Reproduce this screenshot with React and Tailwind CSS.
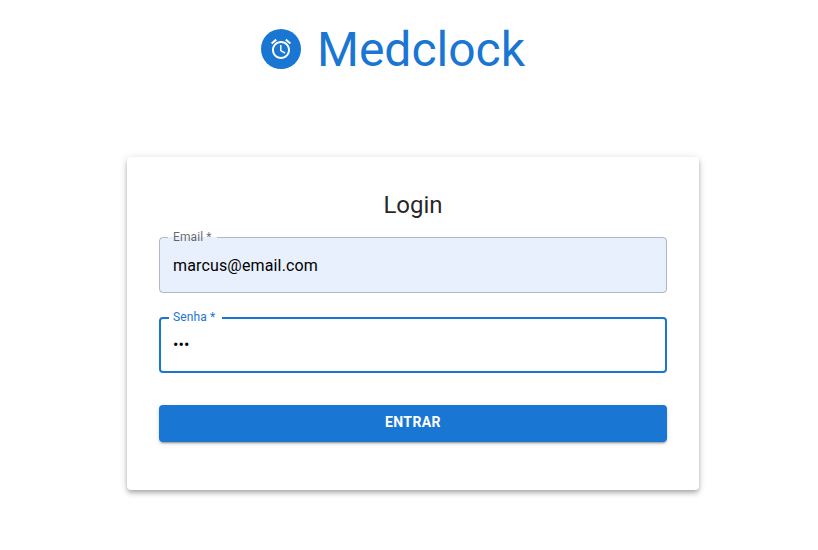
const outline = "pointer-events-none absolute inset-x-0 bottom-0 -top-[5px] m-0 min-w-0 overflow-hidden rounded px-2 text-left";
const shrunkLabel = "pointer-events-none absolute left-[14px] -top-[9px] origin-top-left scale-75 text-base leading-[23px] tracking-[0.15px]";
const input = "block h-14 w-full rounded px-[14px] text-base tracking-[0.15px] text-black outline-none";

function AlarmIcon() {
  return (
    <svg viewBox="0 0 24 24" className="h-6 w-6 fill-current" aria-hidden="true">
      <path d="m22 5.72-4.6-3.86-1.29 1.53 4.6 3.86L22 5.72zM7.88 3.39 6.6 1.86 2 5.71l1.29 1.53 4.59-3.85zM12.5 8H11v6l4.75 2.85.75-1.23-4-2.37V8zM12 4c-4.97 0-9 4.03-9 9s4.02 9 9 9c4.97 0 9-4.03 9-9s-4.03-9-9-9zm0 16c-3.87 0-7-3.13-7-7s3.13-7 7-7 7 3.13 7 7-3.13 7-7 7z" />
    </svg>
  );
}

export default function App() {
  return (
    <div className="flex h-[550px] w-[818px] flex-col bg-white pt-[21px] pl-[127px] font-['Roboto',sans-serif] text-black/87">
      <header className="flex h-14 items-center gap-4 pl-[134px] text-[#1976d2]">
        <div className="flex h-10 w-10 items-center justify-center rounded-full bg-[#1976d2] text-white">
          <AlarmIcon />
        </div>
        <h1 className="pt-[2px] text-[48px] leading-[56px]">Medclock</h1>
      </header>

      <main className="mt-20 h-[333px] w-[572px] rounded bg-white p-8 shadow-[0px_2px_4px_-1px_rgba(0,0,0,0.2),0px_4px_5px_0px_rgba(0,0,0,0.14),0px_1px_10px_0px_rgba(0,0,0,0.12)]">
        <h2 className="text-center text-2xl leading-8">Login</h2>
        <form className="mt-4 flex flex-col gap-6">
          <div className="relative h-14">
            <input className={`${input} bg-[#e8f0fe]`} type="text" readOnly value="marcus@email.com" />
            <fieldset className={`${outline} border border-black/23`}>
              <legend className="invisible h-[11px] w-[49px]" />
            </fieldset>
            <label className={`${shrunkLabel} text-black/60`}>Email *</label>
          </div>
          <div className="relative h-14">
            <input className={`${input} pb-[2px]`} type="password" readOnly value="123" />
            <fieldset className={`${outline} border-2 border-[#1976d2]`}>
              <legend className="invisible h-[11px] w-[53px]" />
            </fieldset>
            <label className={`${shrunkLabel} text-[#1976d2]`}>Senha *</label>
          </div>
          <button
            type="button"
            className="mt-2 h-[36.5px] w-full rounded bg-[#1976d2] px-4 pb-[2px] text-sm font-bold tracking-[0.4px] text-white uppercase shadow-[0px_3px_1px_-2px_rgba(0,0,0,0.2),0px_2px_2px_0px_rgba(0,0,0,0.14),0px_1px_5px_0px_rgba(0,0,0,0.12)]"
          >
            Entrar
          </button>
        </form>
      </main>
    </div>
  );
}
